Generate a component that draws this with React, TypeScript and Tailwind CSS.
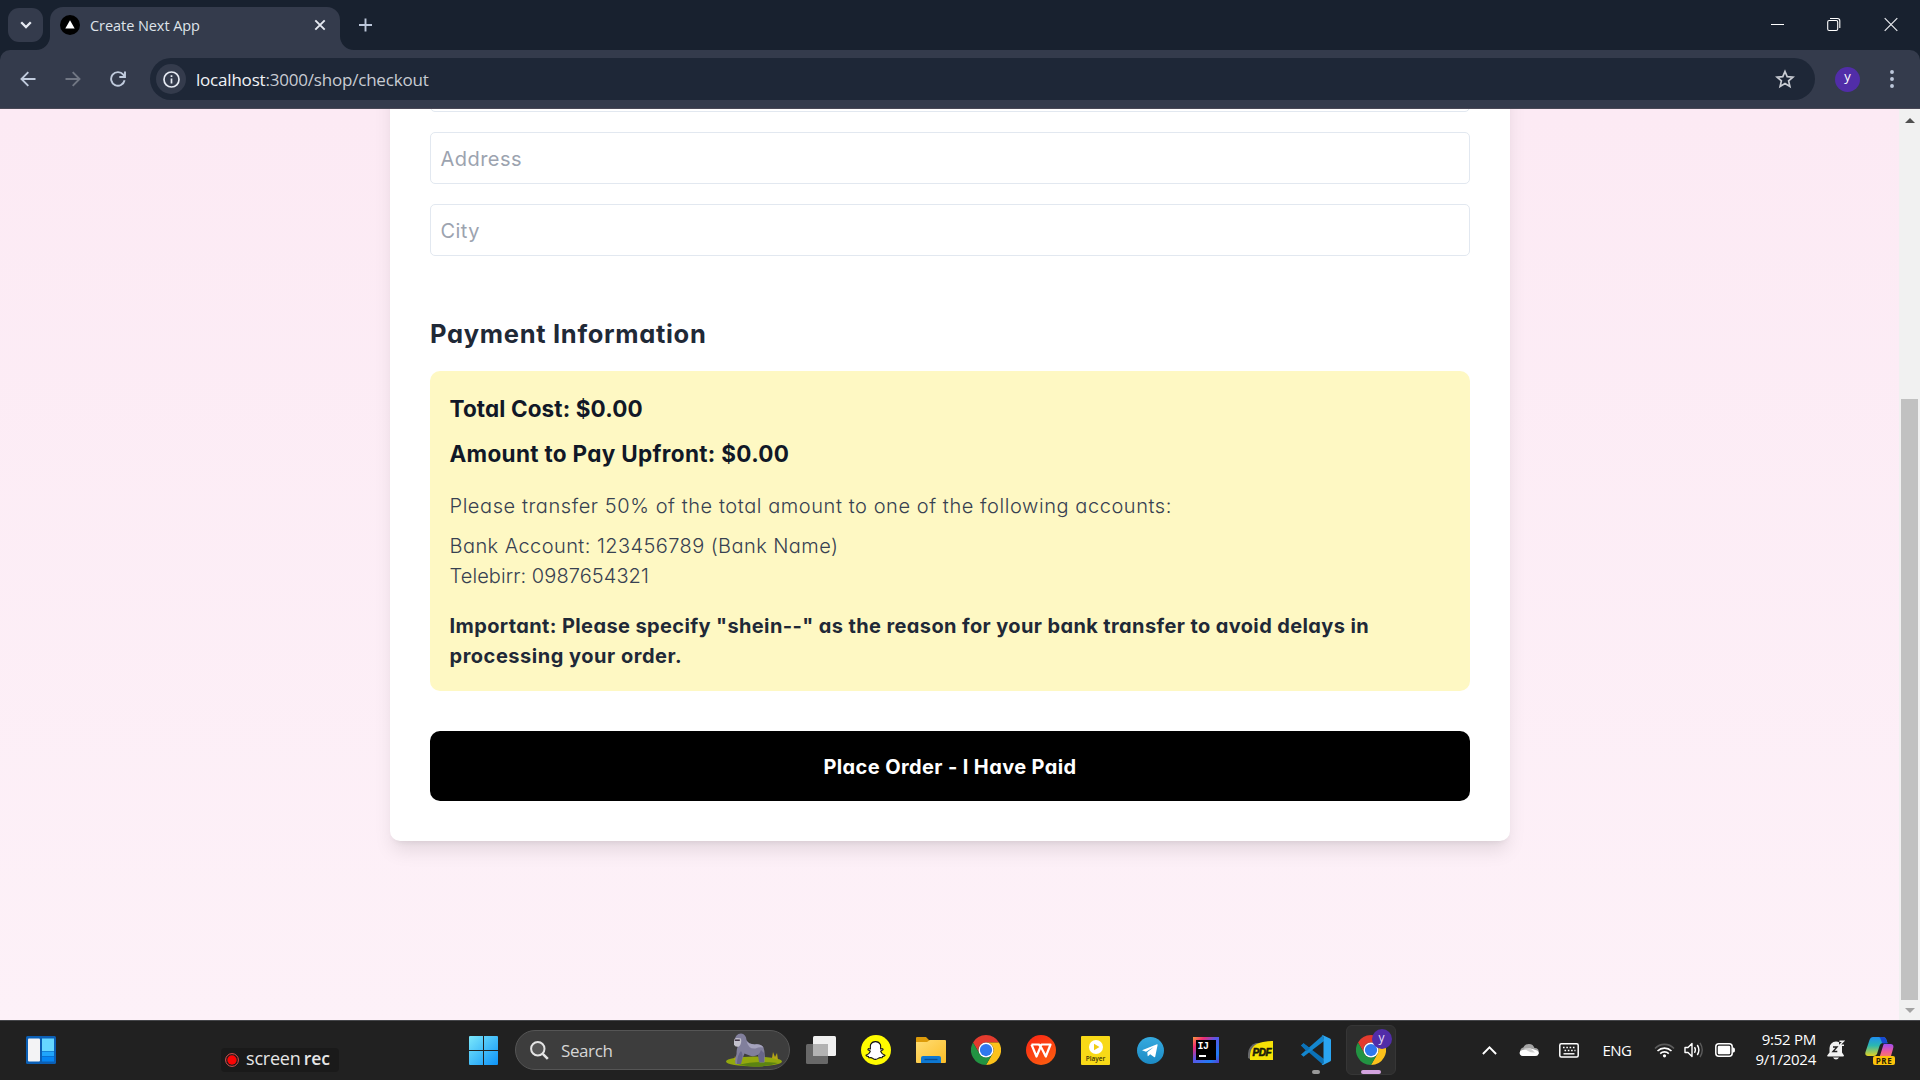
import type { ReactNode } from "react";
import { FaSnapchatGhost } from "react-icons/fa";

function TitleBar() {
  return (
    <div className="flex h-[50px] items-start bg-[#18212f]">
      <div className="mt-2 ml-2 flex h-[34px] w-[35px] items-center justify-center rounded-[11px] bg-[#343b4c]">
        <svg width="12" height="8" viewBox="0 0 12 8" fill="none" stroke="#e6eaf2" strokeWidth="2.3">
          <path d="M1.2 1.2 6 6l4.800-4.800" />
        </svg>
      </div>
      <div className="relative mt-[7px] ml-[7px] flex h-[43px] w-[290px] items-center rounded-t-[13px] bg-[#343b4c] pr-[14px] pb-[7px] pl-[10px]">
        <svg className="absolute bottom-0 -left-[14px]" width="14" height="14" viewBox="0 0 14 14">
          <path d="M0 14A14 14 0 0 0 14 0V14Z" fill="#343b4c" />
        </svg>
        <svg className="absolute -right-[14px] bottom-0" width="14" height="14" viewBox="0 0 14 14">
          <path d="M14 14A14 14 0 0 1 0 0V14Z" fill="#343b4c" />
        </svg>
        <svg width="20" height="20" viewBox="0 0 20 20">
          <circle cx="10" cy="10" r="10" fill="#000" />
          <path d="M10 5.200 14.700 13.400H5.300Z" fill="#fff" />
        </svg>
        <span className="ml-[10px] flex-1 pt-px text-[14.5px] leading-5 tracking-[-0.06px] text-[#dfe3ea]">Create Next App</span>
        <svg width="12" height="12" viewBox="0 0 12 12" stroke="#e6eaf2" strokeWidth="1.900">
          <path d="M1.300 1.300l9.400 9.400M10.700 1.300l-9.400 9.400" />
        </svg>
      </div>
      <svg className="mt-[18px] ml-[19px]" width="13" height="14" viewBox="0 0 13 14" stroke="#bcc7da" strokeWidth="1.900">
        <path d="M0 7h13M6.500 .5v13" />
      </svg>
      <div className="flex-1" />
      <div className="mt-[16px] mr-[22px] flex items-center gap-[43px]">
        <svg width="13" height="16" viewBox="0 0 13 16" stroke="#fff" strokeWidth="1">
          <path d="M0 8.500h13" />
        </svg>
        <svg width="14" height="16" viewBox="0 0 14 16" fill="none" stroke="#fff" strokeWidth="1.100">
          <rect x=".7" y="4.500" width="10" height="10" rx="1.500" />
          <path d="M3 2.500H10.500Q12.800 2.500 12.800 4.800V12" />
        </svg>
        <svg width="14" height="16" viewBox="0 0 14 16" stroke="#e8eaee" strokeWidth="1.200">
          <path d="M.7 2.200l12.600 12.600M13.300 2.200.7 14.800" />
        </svg>
      </div>
    </div>
  );
}

function ToolBar() {
  return (
    <div className="h-[59px] bg-[#18212f]">
      <div className="flex h-full items-center rounded-t-[10px] border-b border-[#494856] bg-[#343b4c]">
        <svg className="ml-5" width="16" height="16" viewBox="0 0 16 16" fill="none" stroke="#c0cbdd" strokeWidth="1.900">
          <path d="M15.500 8H1.600M8.300 1.200 1.500 8l6.800 6.800" />
        </svg>
        <svg className="ml-[29px]" width="16" height="16" viewBox="0 0 16 16" fill="none" stroke="#717784" strokeWidth="1.900">
          <path d="M.5 8h13.900M7.700 1.200 14.500 8l-6.800 6.800" />
        </svg>
        <svg className="ml-[29px]" width="16" height="16" viewBox="0 0 16 16" fill="none" stroke="#c0cbdd" strokeWidth="1.900">
          <path d="M14.600 9.300A6.800 6.800 0 1 1 13.300 3.700L14.800 5.600M15 .4V6H9.300" />
        </svg>
        <div className="ml-[24px] flex h-[42px] w-[1665px] items-center rounded-full bg-[#1e2737] pr-5 pl-[6px]">
          <div className="flex size-[30px] items-center justify-center rounded-full bg-[#343b4c]">
            <svg width="17" height="17" viewBox="0 0 17 17" fill="none" stroke="#e6eaf2" strokeWidth="1.700">
              <circle cx="8.500" cy="8.500" r="7.500" />
              <path d="M8.500 7.600v5M8.500 4.300v1.800" />
            </svg>
          </div>
          <span className="ml-[10px] flex-1 pt-[2px] text-[17px] leading-6 tracking-[-0.2px] text-[#c8ccd3]">
            <span className="text-[#f1f3f6]">localhost</span>:3000/shop/checkout
          </span>
          <svg width="20" height="20" viewBox="0 0 20 20" fill="none" stroke="#c9ccd3" strokeWidth="1.700">
            <path d="M10 2.500l2.200 5.200 5.700.5-4.300 3.700 1.300 5.500L10 14.500l-4.900 2.900 1.300-5.500L2.100 8.200l5.700-.5Z" />
          </svg>
        </div>
        <div className="ml-5 flex size-[25px] items-center justify-center rounded-full bg-[#512da8] pb-[4px] text-[13px] text-white">y</div>
        <svg className="ml-[30px]" width="4" height="18" viewBox="0 0 4 18" fill="#bcc7da">
          <circle cx="2" cy="2" r="1.950" />
          <circle cx="2" cy="9" r="1.950" />
          <circle cx="2" cy="16" r="1.950" />
        </svg>
      </div>
    </div>
  );
}

function Field({ label }: { label: string }) {
  return (
    <div className="flex h-[52px] shrink-0 items-center rounded-[5px] border border-[#e2e8f0] px-[9.500px] pt-px text-[20px] tracking-[0.45px] text-[#9ca3af]">
      {label}
    </div>
  );
}

function CheckoutCard() {
  return (
    <div className="-mt-[89px] flex w-[1120px] flex-col self-start rounded-[10px] bg-white p-10 font-['Inter',sans-serif] shadow-[0_12.5px_18.75px_-3.75px_rgba(0,0,0,0.1),0_5px_7.5px_-5px_rgba(0,0,0,0.1)] [font-feature-settings:'cv11']">
      <div className="flex flex-col gap-5">
        <Field label="" />
        <Field label="Address" />
        <Field label="City" />
      </div>
      <h2 className="mt-[60px] text-[25.500px] leading-[35px] font-bold tracking-[0.69px] text-[#1f2937]">Payment Information</h2>
      <div className="mt-5 h-[320px] rounded-[10px] bg-[#fef8c3] py-5 pl-[19.500px] text-[20px] leading-[30px] whitespace-nowrap text-[#374151]">
        <p className="text-[22.500px] leading-[35px] font-bold tracking-[0.12px] text-[#111827]">Total Cost: $0.00</p>
        <p className="mt-[10px] text-[22.500px] leading-[35px] font-bold tracking-[0.32px] text-[#111827]">Amount to Pay Upfront: $0.00</p>
        <p className="mt-5 font-light tracking-[0.57px]">Please transfer 50% of the total amount to one of the following accounts:</p>
        <p className="mt-[10px] font-light tracking-[0.43px]">Bank Account: 123456789 (Bank Name)</p>
        <p className="font-light tracking-[0.08px]">Telebirr: 0987654321</p>
        <p className="mt-5 font-bold tracking-[0.385px] text-[#1f2937]">
          Important: Please specify "shein--" as the reason for your bank transfer to avoid delays in
          <br />
          <span className="tracking-[0.52px]">processing your order.</span>
        </p>
      </div>
      <button className="mt-10 h-[70px] rounded-[10px] bg-black pt-px text-[20px] font-bold tracking-[0.38px] text-white">Place Order - I Have Paid</button>
    </div>
  );
}

function ScrollBar() {
  return (
    <div className="flex w-[21px] flex-col items-center bg-[#f1f1f1]">
      <svg className="mt-[9px]" width="10" height="5" viewBox="0 0 10 5">
        <path d="M0 5 5 0l5 5Z" fill="#505050" />
      </svg>
      <div className="mt-[276px] h-[601px] w-[17px] bg-[#c1c1c1]" />
      <svg className="mt-[8px]" width="10" height="5" viewBox="0 0 10 5">
        <path d="M0 0 5 5l5-5Z" fill="#a3a3a3" />
      </svg>
    </div>
  );
}

function Chrome() {
  return (
    <svg width="30" height="30" viewBox="0 0 48 48">
      <path fill="#e33b2e" d="M24 12H44.780a23.994 23.994 0 0 0-41.564.003L13.608 30l.009-.002A11.985 11.985 0 0 1 24 12Z" />
      <path fill="#fcc21b" d="M34.391 30.003 24.001 48A23.994 23.994 0 0 0 44.780 12.003H23.999l-.003.009A11.985 11.985 0 0 1 34.391 30.003Z" />
      <path fill="#229342" d="M13.609 30.003 3.218 12.006A23.994 23.994 0 0 0 24.003 48L34.393 30.003l-.007-.007a11.985 11.985 0 0 1-20.778.007Z" />
      <circle cx="24" cy="24" r="12" fill="#fff" />
      <circle cx="24" cy="24" r="9.800" fill="#2f78ee" />
    </svg>
  );
}

function Gorilla() {
  return (
    <svg width="56" height="34" viewBox="0 0 56 34">
      <ellipse cx="28" cy="28.500" rx="28" ry="5" fill="#93a80e" />
      <path d="M12 32q18-5 40-2-10 4-26 3.500Z" fill="#5c8412" />
      <path d="M46 25l1-6 2 5 2-4 1 7ZM8 27l1-4 2 4Z" fill="#b5a614" />
      <path d="M9 7q0-6 6-6.500Q20 1 20.500 7q2 4 8 4.500 6-1 9 3 2 5 1 15h-5l-1-8q-5 3-9 1l-5-2q-2 5-4 10.500h-5q-1-4 1-10 0-6 2-9-3-2-3-5Z" fill="#817f9c" />
      <path d="M20.500 8q2 3 8 3.500 6-1 9 3-4-1-8 1-7 1-9-7.500Z" fill="#a5a3bd" />
      <path d="M11 31q0-9 4-13 3 3 0 13ZM32 22q2-2 3-5l3 3v9h-5Z" fill="#68668a" />
      <path d="M8 8q0-3 3-3l4 .5q1 5-2 8-4 1-5-2Z" fill="#c3c1cd" />
      <path d="M8.800 7.200h5" stroke="#3b3042" strokeWidth="1.500" />
    </svg>
  );
}

function Slot({ children }: { children: ReactNode }) {
  return <div className="relative flex h-full w-[55px] items-center justify-center">{children}</div>;
}

function TaskBar() {
  return (
    <div className="flex h-[60px] items-center border-t border-[#45464a] bg-[#212121] pb-px text-white">
      <svg className="ml-[26px]" width="30" height="28" viewBox="0 0 30 28">
        <rect width="30" height="28" rx="1.500" fill="#0b5fb5" />
        <rect x="2" y="2.500" width="12" height="23" rx="1" fill="#f3f3f5" />
        <rect x="16" y="2.500" width="12" height="12.500" fill="#66d7ff" />
        <rect x="16" y="15.500" width="12" height="4.500" fill="#20a5fb" />
        <rect x="16" y="20.500" width="12" height="5" fill="#0685f2" />
      </svg>
      <div className="mt-[19px] ml-[165px] flex h-6 w-[118px] items-center rounded bg-[#1a1a1a] pl-1">
        <svg width="14" height="14" viewBox="0 0 14 14">
          <circle cx="7" cy="7" r="6.400" fill="none" stroke="#e05050" strokeWidth="1" />
          <circle cx="7" cy="7" r="4.700" fill="#fb0505" />
        </svg>
        <span className="ml-[7px] pb-[4px] text-[18px] leading-5 tracking-[-0.2px] text-[#e6e6e6]">screen</span>
        <span className="ml-[3px] pb-[4px] text-[17.5px] leading-5 font-semibold text-[#e6e6e6]">rec</span>
      </div>

      <svg className="ml-[130px]" width="29" height="29" viewBox="0 0 29 29">
        <defs>
          <linearGradient id="win" x1="0" y1="0" x2="1" y2="1">
            <stop offset="0" stopColor="#7be8fb" />
            <stop offset="1" stopColor="#0d93f8" />
          </linearGradient>
        </defs>
        <path fill="url(#win)" d="M0 1Q0 0 1 0H14V14H0ZM15 0H28Q29 0 29 1V14H15ZM0 15H14V29H1Q0 29 0 28ZM15 15H29V28Q29 29 28 29H15Z" />
      </svg>
      <div className="ml-[17px] flex h-10 w-[275px] items-center rounded-full border border-[#555] bg-[#3d3d3d] pr-[7px] pl-[14px]">
        <svg width="19" height="19" viewBox="0 0 19 19" fill="none" stroke="#e4e4e4">
          <circle cx="7.800" cy="7.800" r="6.700" strokeWidth="2" fill="#555" />
          <path d="M12.800 12.800l5 5" strokeWidth="2.600" />
        </svg>
        <span className="ml-[12px] flex-1 pt-px text-[17px] leading-6 tracking-[-0.4px] text-[#d6d6d6]">Search</span>
        <Gorilla />
      </div>

      <div className="ml-[3px] flex h-full items-center">
        <Slot>
          <svg width="30" height="28" viewBox="0 0 30 28">
            <rect y="8" width="22" height="20" rx="1.500" fill="#686868" />
            <rect x="7" width="23" height="20" rx="1.500" fill="#f0f0f0" />
            <rect x="7" y="8" width="15" height="12" fill="#b2b2b2" />
          </svg>
        </Slot>
        <Slot>
          <div className="flex size-[30px] items-center justify-center rounded-full bg-[#fffc00]">
            <FaSnapchatGhost size={19} color="#fff" stroke="#111" strokeWidth={30} className="overflow-visible" />
          </div>
        </Slot>
        <Slot>
          <svg width="30" height="28" viewBox="0 0 30 28">
            <defs>
              <linearGradient id="folder" x1="0" y1="0" x2="1" y2="1">
                <stop offset="0" stopColor="#ffdd74" />
                <stop offset="1" stopColor="#fbbd27" />
              </linearGradient>
            </defs>
            <path d="M0 2Q0 1 1 1H10L13 4H26V10H0Z" fill="#dd9b0a" />
            <path d="M0 6H11L14 4H29Q30 4 30 5V26Q30 27 29 27H1Q0 27 0 26Z" fill="url(#folder)" />
            <path d="M5 27V22Q5 20 7 20H23Q25 20 25 22V27Z" fill="#0e78d2" />
            <path d="M8.500 23.500h13" stroke="#084c92" strokeWidth="1.300" />
          </svg>
        </Slot>
        <Slot>
          <Chrome />
        </Slot>
        <Slot>
          <svg width="30" height="30" viewBox="0 0 30 30">
            <defs>
              <linearGradient id="wps" x1="0" y1="0" x2=".6" y2="1">
                <stop offset="0" stopColor="#fb2315" />
                <stop offset="1" stopColor="#fb5a10" />
              </linearGradient>
            </defs>
            <circle cx="15" cy="15" r="15" fill="url(#wps)" />
            <path d="M5.500 9.500H13L15.800 13.500M5.500 9.500 10.500 21.500 15.500 9.500H24.500L19.800 21.500 15.500 13" fill="none" stroke="#fff" strokeWidth="2.200" strokeLinejoin="round" />
          </svg>
        </Slot>
        <Slot>
          <div className="flex h-[29px] w-[29px] flex-col items-center rounded-[1px] bg-[#f8d917] pt-[4px] text-[#3a3208]">
            <svg className="shrink-0" width="14" height="14" viewBox="0 0 14 14">
              <circle cx="7" cy="7" r="7" fill="#fff" />
              <path d="M5 3.700 10.500 7 5 10.300Z" fill="#f0cd12" />
            </svg>
            <span className="text-[6.500px] leading-[9px] font-semibold">Player</span>
          </div>
        </Slot>
        <Slot>
          <svg width="27" height="27" viewBox="0 0 27 27">
            <defs>
              <linearGradient id="tg" x1="0" y1="0" x2="0" y2="1">
                <stop offset="0" stopColor="#35aadf" />
                <stop offset="1" stopColor="#1c8bc5" />
              </linearGradient>
            </defs>
            <circle cx="13.500" cy="13.500" r="13.500" fill="url(#tg)" />
            <path d="M5 13.300 20 7.300Q20.800 7.200 20.600 8L18.200 19.700Q18 20.500 17 20L13.200 17.200 11.300 19Q10.700 19.500 10.600 18.500L10.300 15.300 16.800 10 9 14.800Z" fill="#fff" />
          </svg>
        </Slot>
        <Slot>
          <div className="flex size-[26px] items-center justify-center bg-[linear-gradient(135deg,#fb9b3c_0%,#f02c72_22%,#5b55e6_45%,#1f7cf5_80%,#5a3fd0_100%)]">
            <div className="flex size-[20px] flex-col bg-black pt-[2px] pl-[2px]">
              <span className="font-['Liberation_Mono',monospace] text-[10px] leading-[9px] font-bold tracking-[-0.5px] text-white">IJ</span>
              <span className="mt-[4px] ml-px h-[1.500px] w-[7px] bg-white" />
            </div>
          </div>
        </Slot>
        <Slot>
          <div className="relative h-[19px] w-[26px]">
            <svg width="26" height="19" viewBox="0 0 26 19">
              <path d="M0 17Q-1 5 8 2L13 2 4 18H2Z" fill="#66676a" />
              <path d="M2 18Q1 3 15 1Q21 0 25 0V19H2Z" fill="#f6e206" />
            </svg>
            <span className="absolute top-[7px] left-[5px] font-['Liberation_Sans',sans-serif] text-[10px] leading-[10px] font-bold tracking-[-0.5px] text-[#1a1a08] italic [-webkit-text-stroke:0.6px_#1a1a08]">PDF</span>
          </div>
        </Slot>
        <Slot>
          <svg width="30" height="30" viewBox="0 0 30 30">
            <path d="M0 10.500 2.500 8.300 23 24 22 29.700Z" fill="#0b72b8" />
            <path d="M0 19.500 2.500 21.700 23 6 22 .3Z" fill="#1487cf" />
            <path d="M0 10.500 2.500 8.300 9 13.200 5.500 16.200Z" fill="#0b72b8" />
            <path d="M22 .2 29 3.500Q30 4 30 5V25Q30 26 29 26.500L22 29.900Q21.500 30 20.500 29.200 22.500 29.500 22.500 27.500V2.500Q22.500 .5 20.500 .9 21.500 0 22 .2Z" fill="#2aa5f2" />
          </svg>
          <span className="absolute bottom-[5px] left-[23.500px] h-1 w-2 rounded-full bg-[#999]" />
        </Slot>
        <Slot>
          <div className="relative flex size-[50px] items-center justify-center rounded-md border border-[#363636] bg-[#2d2d2d]">
            <Chrome />
            <span className="absolute top-[3px] left-[25px] flex size-[20px] items-center justify-center rounded-full bg-[#512da8] pb-[2px] text-[12px] leading-none text-[#e7dff8]">y</span>
            <span className="absolute bottom-0 left-[14px] h-1 w-[20px] rounded-full bg-[#d3a3df]" />
          </div>
        </Slot>
      </div>

      <div className="ml-[72px] flex items-center">
        <div className="flex w-[38px] justify-center">
          <svg width="15" height="9" viewBox="0 0 15 9" fill="none" stroke="#fff" strokeWidth="1.900">
            <path d="M.9 8 7.500 1.400 14.100 8" />
          </svg>
        </div>
        <div className="flex w-[42px] justify-center">
          <svg width="20" height="14" viewBox="0 0 20 14">
            <path d="M4.500 13A4.400 4.400 0 0 1 4.300 4.500 6 6 0 0 1 15.500 5 4 4 0 0 1 16 13Z" fill="#a4a4a4" />
            <path d="M1 11.500Q-.5 8 3.500 7L11 5.500Q15 6 16.500 7Q20 8 19.800 10.500Q19 13 16 13H4Q2 13 1 11.500Z" fill="#fdfdfd" />
            <path d="M5 5.500 11 5l5 4.500Q12 10 9 8Z" fill="#d0d0d0" />
          </svg>
        </div>
        <div className="flex w-[38px] justify-center">
          <svg width="20" height="15" viewBox="0 0 20 15" fill="none" stroke="#fff">
            <rect x=".8" y=".8" width="18.400" height="13.200" rx="1.500" strokeWidth="1.500" />
            <path d="M4 4.500h13M5.500 7.500h11" strokeWidth="1.600" strokeDasharray="1.600 1.700" />
            <path d="M4.500 10.800h11" strokeWidth="1.400" />
          </svg>
        </div>
        <div className="flex w-[58px] justify-center text-[15px] tracking-[-0.5px]">ENG</div>
        <div className="flex w-9 justify-center">
          <svg width="21" height="16" viewBox="0 0 21 16" fill="none" stroke="#fff" strokeWidth="1.600">
            <path d="M1 6.500a13 13 0 0 1 19 0" stroke="#5b5b5b" />
            <path d="M3.500 9a10 10 0 0 1 14 0M6.200 11.600a6.300 6.300 0 0 1 8.600 0" />
            <circle cx="10.500" cy="13.800" r="1.600" fill="#fff" stroke="none" />
          </svg>
        </div>
        <div className="flex w-[24px] justify-center">
          <svg width="21" height="16" viewBox="0 0 21 16" fill="none" stroke="#fff" strokeWidth="1.400" strokeLinejoin="round">
            <path d="M1 5.500H4L8 1.500V14.500L4 10.500H1Z" />
            <path d="M10.500 5.200q1.800 2.800 0 5.600M13.300 3q3.200 5 0 10" />
            <path d="M16 .8q4.500 7.200 0 14.400" stroke="#5b5b5b" />
          </svg>
        </div>
        <div className="flex w-[37px] justify-center">
          <svg width="20" height="14" viewBox="0 0 20 14">
            <rect x=".8" y=".8" width="16.400" height="12.400" rx="3" fill="none" stroke="#fff" strokeWidth="1.500" />
            <rect x="2.800" y="2.800" width="12.400" height="8.400" rx="1.200" fill="#fff" />
            <path d="M18 4.500h.5q1.500 0 1.500 2.500t-1.500 2.500H18Z" fill="#fff" />
          </svg>
        </div>
        <div className="mt-[-2px] flex w-[73px] flex-col items-end text-[15px] leading-5 tracking-[-0.250px]">
          <span>9:52 PM</span>
          <span>9/1/2024</span>
        </div>
        <div className="flex w-10 justify-center">
          <svg width="18" height="20" viewBox="0 0 18 20">
            <path d="M2.500 8Q3 2 9 1.500 11 1.600 12 2.300V6H15V12.500L17 15.500Q17 16.500 16 16.500H1Q0 16.500 .2 15.500L2.500 12.500Z" fill="#f2f2f2" />
            <path d="M6 17.500h6q-1 2-3 2t-3-2Z" fill="#f2f2f2" />
            <path d="M6 7h4L6 11.500h4.300" fill="none" stroke="#212121" strokeWidth="1.400" />
            <path d="M12.500 1.200H16.500L12.500 5.200H17" fill="none" stroke="#f2f2f2" strokeWidth="1.400" />
          </svg>
        </div>
        <div className="relative ml-[9px] h-[30px] w-[30px]">
          <svg width="30" height="30" viewBox="0 0 30 30">
            <defs>
              <linearGradient id="copA" x1="0" y1="0" x2="0" y2="1">
                <stop offset="0" stopColor="#1f8ff0" />
                <stop offset=".45" stopColor="#2bb7b0" />
                <stop offset="1" stopColor="#e3d323" />
              </linearGradient>
              <linearGradient id="copB" x1="0" y1="0" x2="0" y2="1">
                <stop offset="0" stopColor="#a04df0" />
                <stop offset=".5" stopColor="#ee5a9c" />
                <stop offset="1" stopColor="#fb8a4c" />
              </linearGradient>
            </defs>
            <path d="M8 2H18Q20.500 2 21.500 5L22.500 8H18Q15.500 8 14.500 11L12 19Q11 21 9 21H3Q-.5 21 .5 17L4.500 5Q5.500 2 8 2Z" fill="url(#copA)" />
            <path d="M14 2H18Q20.500 2 21.500 5L22.500 8.500H18.500Q17 8.500 16 5Q15.500 2.500 14 2Z" fill="#1849d2" />
            <path d="M19 9H26Q29.500 9.500 28 14L26 21Q25 24 22 24H14L18 11Q18.500 9 19 9Z" fill="url(#copB)" />
          </svg>
          <span className="absolute right-0 bottom-0 flex h-[9px] w-[22px] items-center justify-center rounded-[2px] bg-[#fcc30b] text-[8px] leading-none font-bold tracking-[0.5px] text-[#2a2205]">PRE</span>
        </div>
      </div>
    </div>
  );
}

export default function App() {
  return (
    <div className="flex h-[1080px] w-[1920px] flex-col overflow-hidden font-['Open_Sans',sans-serif]">
      <TitleBar />
      <ToolBar />
      <div className="flex min-h-0 flex-1 overflow-hidden">
        <div className="flex flex-1 overflow-hidden bg-linear-to-b from-[#fceaf4] to-[#fdf1f8] pl-[390px]">
          <CheckoutCard />
        </div>
        <ScrollBar />
      </div>
      <TaskBar />
    </div>
  );
}
